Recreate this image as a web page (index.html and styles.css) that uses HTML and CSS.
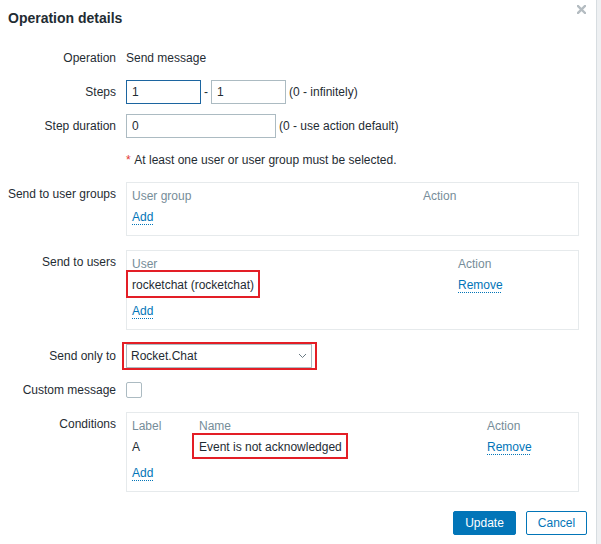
FILE: index.html
```html
<!DOCTYPE html>
<html>
<head>
<meta charset="utf-8">
<link rel="stylesheet" href="styles.css">
</head>
<body>
<div class="dialog">
  <div class="dlg-head">
    <h2 class="title">Operation details</h2>
    <button class="close" aria-label="Close">
      <svg width="9" height="9" viewBox="0 0 9 9"><path d="M1 1L8 8M8 1L1 8" stroke="#b4bcc1" stroke-width="2.4" stroke-linecap="square"/></svg>
    </button>
  </div>

  <div class="form">
    <label class="lbl">Operation</label>
    <div class="val">Send message</div>

    <label class="lbl">Steps</label>
    <div class="val line">
      <input class="inp inp-sm focused" value="1">
      <span class="dash">-</span>
      <input class="inp inp-sm" value="1">
      <span class="hint">(0 - infinitely)</span>
    </div>

    <label class="lbl">Step duration</label>
    <div class="val line">
      <input class="inp inp-md" value="0">
      <span class="hint">(0 - use action default)</span>
    </div>

    <div class="lbl"></div>
    <div class="val"><span class="req">*</span> At least one user or user group must be selected.</div>

    <label class="lbl">Send to user groups</label>
    <div class="box spaced">
      <div class="tbl tbl-ug">
        <div class="th">User group</div>
        <div class="th">Action</div>
        <div class="add"><a class="link">Add</a></div>
      </div>
    </div>

    <label class="lbl">Send to users</label>
    <div class="box spaced">
      <div class="tbl tbl-users">
        <div class="th">User</div>
        <div class="th">Action</div>
        <div class="td"><span class="mark mark-user">rocketchat (rocketchat)</span></div>
        <div class="td"><a class="link">Remove</a></div>
        <div class="add"><a class="link">Add</a></div>
      </div>
    </div>

    <label class="lbl">Send only to</label>
    <div class="val line">
      <div class="select mark-select">
        <span>Rocket.Chat</span>
        <svg class="chev" width="9" height="6" viewBox="0 0 9 6"><path d="M1 1L4.5 4.5L8 1" fill="none" stroke="#6b7a83" stroke-width="1"/></svg>
      </div>
    </div>

    <label class="lbl">Custom message</label>
    <div class="val line"><span class="checkbox"></span></div>

    <label class="lbl">Conditions</label>
    <div class="box">
      <div class="tbl tbl-cond">
        <div class="th">Label</div>
        <div class="th">Name</div>
        <div class="th">Action</div>
        <div class="td">A</div>
        <div class="td"><span class="mark mark-cond">Event is not acknowledged</span></div>
        <div class="td"><a class="link">Remove</a></div>
        <div class="add"><a class="link">Add</a></div>
      </div>
    </div>
  </div>

  <div class="footer">
    <button class="btn primary">Update</button>
    <button class="btn alt">Cancel</button>
  </div>
</div>
</body>
</html>
```

FILE: styles.css
```css
html, body {
  margin: 0;
  padding: 0;
}
body {
  background: #eef0f2;
  font-family: "Liberation Sans", Arial, sans-serif;
  font-size: 12px;
  color: #1f2c33;
  width: 601px;
  height: 544px;
  overflow: hidden;
}
.dialog {
  position: relative;
  width: 597px;
  height: 544px;
  background: #ffffff;
  border-right: 1px solid #d7dde1;
  padding: 0 9px 0 8px;
  box-sizing: border-box;
}
.dlg-head {
  padding-top: 10px;
  height: 26px;
  box-sizing: border-box;
}
.title {
  margin: 0;
  font-size: 14px;
  line-height: 16px;
  font-weight: bold;
  color: #1f2c33;
}
.close {
  position: absolute;
  top: 4px;
  right: 9px;
  width: 11px;
  height: 11px;
  padding: 1px;
  border: 0;
  background: none;
  display: flex;
}
.form {
  margin-top: 20px;
  display: grid;
  grid-template-columns: 108px 1fr;
  column-gap: 10px;
  row-gap: 10px;
}
.lbl {
  text-align: right;
  line-height: 24px;
  white-space: nowrap;
  direction: rtl;
}
.val {
  line-height: 24px;
  min-height: 24px;
}
.line {
  display: flex;
  align-items: center;
}
.inp {
  box-sizing: border-box;
  height: 24px;
  border: 1px solid #acbbc2;
  padding: 0 5px;
  font: inherit;
  color: #1f2c33;
  background: #fff;
  outline: none;
  margin: 0;
}
.inp-sm { width: 75px; }
.inp-md { width: 150px; }
.focused { border-color: #1c65a0; }
.dash {
  width: 10px;
  text-align: center;
}
.hint { margin-left: 3px; }
.req {
  color: #e33734;
  margin-right: 1px;
}
.box {
  width: 453px;
  box-sizing: border-box;
  border: 1px solid #e6eaec;
  padding: 6px 5px 11px;
}
.spaced { margin-bottom: 4px; }
.tbl {
  display: grid;
  line-height: 14px;
}
.tbl-ug { grid-template-columns: 291px auto; }
.tbl-users { grid-template-columns: 326px auto; }
.tbl-cond { grid-template-columns: 67px 288px auto; }
.th {
  color: #768d99;
  height: 21px;
}
.td {
  height: 26px;
}
.add {
  grid-column: 1 / -1;
  height: 14px;
}
.link {
  color: #0275b8;
  text-decoration: underline dotted;
  text-decoration-thickness: 1px;
  text-underline-offset: 3px;
  cursor: pointer;
}
.mark {
  position: relative;
  display: inline-block;
}
.mark::after {
  content: "";
  position: absolute;
  border: 2px solid #e31e26;
  pointer-events: none;
}
.mark-user::after { inset: -8px -6px -6px -6px; }
.mark-cond::after { inset: -7px -6px -5px -7px; }
.select {
  position: relative;
  box-sizing: border-box;
  width: 186px;
  height: 24px;
  border: 1px solid #acbbc2;
  padding: 0 4px 0 4px;
  display: flex;
  align-items: center;
  justify-content: space-between;
}
.chev { margin-right: 0; }
.mark-select::after {
  content: "";
  position: absolute;
  inset: -3px -6px -3px -5px;
  border: 2px solid #e31e26;
}
.checkbox {
  width: 16px;
  height: 16px;
  box-sizing: border-box;
  border: 1px solid #acbbc2;
  border-radius: 2px;
  background: #fff;
}
.footer {
  margin-top: 19px;
  display: flex;
  justify-content: flex-end;
  gap: 10px;
}
.btn {
  box-sizing: border-box;
  height: 24px;
  padding: 0 10px;
  font: inherit;
  font-size: 12px;
  border-radius: 2px;
  border: 1px solid #0275b8;
}
.primary {
  background: #0275b8;
  color: #fff;
  width: 63px;
}
.alt {
  background: #fff;
  color: #0275b8;
  width: 61px;
}
```
